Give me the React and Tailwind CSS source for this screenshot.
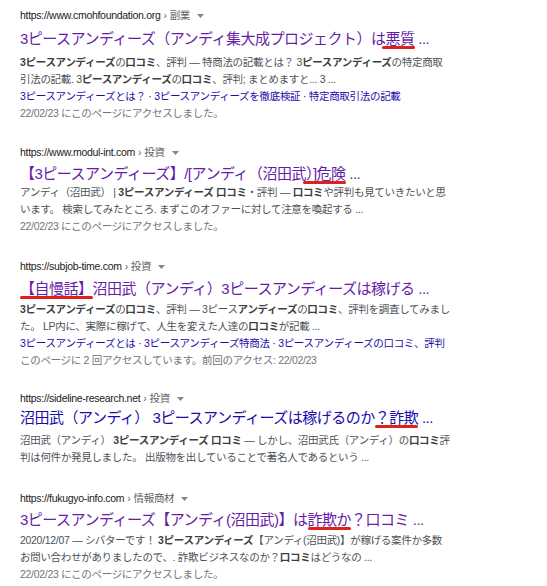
const font = { fontFamily: '"Liberation Sans", "Noto Sans CJK JP", sans-serif' };

function Mark({ children, className = 'left-0 right-0' }) {
  return (
    <span className="relative">
      {children}
      <span className={`absolute top-[100%] -mt-[1px] h-[2.5px] rounded-full bg-[#dd2219] ${className}`} />
    </span>
  );
}

function Url({ href, crumb, className = '' }) {
  return (
    <div className={`flex items-center h-[20px] text-[10.5px] tracking-[-0.3px] text-[#202124] whitespace-nowrap ${className}`}>
      <span>{href}</span>
      <span className="text-[#5f6368] mx-[3px]">›</span>
      <span className="text-[#5f6368]">{crumb}</span>
      <svg width="7" height="4" viewBox="0 0 7 4" className="ml-[7px]">
        <path d="M0 0h7L3.5 4z" fill="#80868b" />
      </svg>
    </div>
  );
}

function Title({ children, visited = true, className = '' }) {
  return (
    <div
      className={`h-[22px] leading-[22px] text-[15px] tracking-[-0.5px] whitespace-nowrap ${
        visited ? 'text-[#681da8]' : 'text-[#1a0dab]'
      } ${className}`}
    >
      {children}
    </div>
  );
}

function Lines({ children, className = '' }) {
  return (
    <div className={`text-[10.5px] tracking-[-0.3px] leading-[17px] whitespace-nowrap ${className}`}>
      {children}
    </div>
  );
}

function B({ children }) {
  return <b className="font-bold text-[#3c4043]">{children}</b>;
}

export default function App() {
  return (
    <div className="w-[547px] h-[586px] bg-white overflow-hidden pl-[20px] pt-[6px] flex flex-col" style={font}>
      {/* result 1 */}
      <div className="flex flex-col">
        <Url href="https://www.cmohfoundation.org" crumb="副業" />
        <Title className="mt-[2px]">
          3ピースアンディーズ（アンディ集大成プロジェクト）は
          <Mark className="-left-[4px] right-0">悪質</Mark> ...
        </Title>
        <div className="mt-[4px] text-[#4d5156]">
          <Lines>
            <B>3ピースアンディーズ</B>の<B>口コミ</B>、評判 — 特商法の記載とは？ 3<B>ピースアンディーズ</B>の特定商取
          </Lines>
          <Lines>
            引法の記載. 3<B>ピースアンディーズ</B>の<B>口コミ</B>、評判; まとめますと... 3 ...
          </Lines>
        </div>
        <Lines className="text-[#1a0dab] leading-[16px]">
          3ピースアンディーズとは？ · 3ピースアンディーズを徹底検証 · 特定商取引法の記載
        </Lines>
        <Lines className="text-[#70757a] leading-[14px]">22/02/23 にこのページにアクセスしました。</Lines>
      </div>

      {/* result 2 */}
      <div className="flex flex-col mt-[21px]">
        <Url href="https://www.modul-int.com" crumb="投資" />
        <Title className="mt-[0px]">
          【3ピースアンディーズ】/[アンディ（沼田武）
          <Mark className="-left-[10px] right-0">]危険</Mark> ...
        </Title>
        <div className="-mt-[1px] text-[#4d5156]">
          <Lines>
            アンディ（沼田武） | <B>3ピースアンディーズ 口コミ</B>・評判 — <B>口コミ</B>や評判も見ていきたいと思
          </Lines>
          <Lines>います。 検索してみたところ. まずこのオファーに対して注意を喚起する ...</Lines>
          <Lines className="text-[#70757a]">22/02/23 にこのページにアクセスしました。</Lines>
        </div>
      </div>

      {/* result 3 */}
      <div className="flex flex-col mt-[22px]">
        <Url href="https://subjob-time.com" crumb="投資" />
        <Title className="mt-[1px]">
          <Mark>【自慢話】</Mark>沼田武（アンディ）3ピースアンディーズは稼げる ...
        </Title>
        <div className="mt-[1px] text-[#4d5156]">
          <Lines>
            <B>3ピースアンディーズ</B>の<B>口コミ</B>、評判 — 3ピース<B>アンディーズ</B>の<B>口コミ</B>、評判を調査してみまし
          </Lines>
          <Lines>
            た。 LP内に、実際に稼げて、人生を変えた人達の<B>口コミ</B>が記載 ...
          </Lines>
        </div>
        <Lines className="text-[#1a0dab] leading-[16px]">
          3ピースアンディーズとは · 3ピースアンディーズ特商法 · 3ピースアンディーズの口コミ、評判
        </Lines>
        <Lines className="text-[#70757a] leading-[16px]">
          このページに 2 回アクセスしています。前回のアクセス: 22/02/23
        </Lines>
      </div>

      {/* result 4 */}
      <div className="flex flex-col mt-[20px]">
        <Url href="https://sideline-research.net" crumb="投資" />
        <Title visited={false} className="-mt-[2px]">
          沼田武（アンディ） 3ピースアンディーズは稼げるのか
          <Mark>？詐欺</Mark> ...
        </Title>
        <div className="mt-[3px] text-[#4d5156]">
          <Lines>
            沼田武（アンディ） <B>3ピースアンディーズ 口コミ</B> — しかし、沼田武氏（アンディ）の<B>口コミ</B>評
          </Lines>
          <Lines>判は何件か発見しました。 出版物を出していることで著名人であるという ...</Lines>
        </div>
      </div>

      {/* result 5 */}
      <div className="flex flex-col mt-[23px]">
        <Url href="https://fukugyo-info.com" crumb="情報商材" />
        <Title className="mt-[0px]">
          3ピースアンディーズ【アンディ(沼田武)】は<Mark>詐欺か</Mark>？口コミ ...
        </Title>
        <div className="mt-[1px] text-[#4d5156]">
          <Lines>
            2020/12/07 — シバターです！ <B>3ピースアンディーズ</B>【アンディ(沼田武)】が稼げる案件か多数
          </Lines>
          <Lines>
            お問い合わせがありましたので、. 詐欺ビジネスなのか？<B>口コミ</B>はどうなの ...
          </Lines>
          <Lines className="text-[#70757a]">22/02/23 にこのページにアクセスしました。</Lines>
        </div>
      </div>
    </div>
  );
}
